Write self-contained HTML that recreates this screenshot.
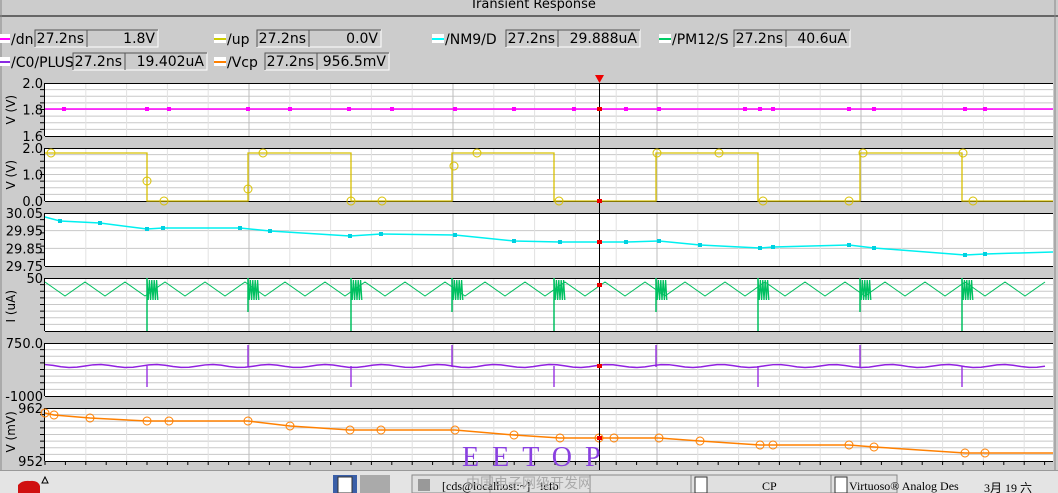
<!DOCTYPE html><html><head><meta charset="utf-8"><style>
html,body{margin:0;padding:0;width:1058px;height:493px;overflow:hidden;background:#cccccc;font-family:"Liberation Sans","DejaVu Sans",sans-serif}
svg{position:absolute;left:0;top:0}
</style></head><body>
<svg id="s" width="1058" height="493" xmlns="http://www.w3.org/2000/svg" font-family="DejaVu Sans, Liberation Sans, sans-serif">
<rect x="0" y="0" width="1058" height="493" fill="#cccccc"/>
<line x1="0" y1="16" x2="1058" y2="16" stroke="#000" stroke-width="1"/>
<line x1="1" y1="0" x2="1" y2="470" stroke="#888"/>
<line x1="1055" y1="0" x2="1055" y2="470" stroke="#888"/>
<text x="470" y="8" font-size="13" fill="#000">Transient Response</text>
<g id="leg" font-size="14" fill="#000"></g>
<g id="plots"></g>
<rect x="0" y="470" width="1058" height="23" fill="#e4e4e4"/>
<line x1="0" y1="470.5" x2="1058" y2="470.5" stroke="#999"/>
<path d="M18 493 L18 485 Q22 480 30 481 Q38 480 40 486 L40 493Z" fill="#d01010"/>
<path d="M42 483 L45 477 L48 483Z" fill="none" stroke="#000"/>
<rect x="333" y="475" width="24" height="18" fill="#3a5fa8"/><rect x="338" y="477" width="14" height="16" fill="#fff" stroke="#333"/>
<rect x="360" y="475" width="30" height="18" fill="#aaa"/>
<rect x="412" y="475" width="485" height="18" fill="#e0e0e0" stroke="#888"/>
<line x1="490" y1="475" x2="490" y2="493" stroke="#888"/><line x1="590" y1="475" x2="590" y2="493" stroke="#888"/>
<line x1="691" y1="475" x2="691" y2="493" stroke="#888"/><line x1="831" y1="475" x2="831" y2="493" stroke="#888"/>
<rect x="418" y="479" width="12" height="12" fill="#999"/>
<rect x="695" y="477" width="12" height="16" fill="#fff" stroke="#333"/>
<rect x="835" y="477" width="12" height="16" fill="#fff" stroke="#333"/>
<g font-family="Liberation Serif, serif" font-size="12" fill="#000">
<text x="442" y="490">[cds@localhost:~]</text><text x="540" y="490">icfb</text><text x="762" y="490">CP</text><text x="849" y="490">Virtuoso® Analog Des</text><text x="984" y="492">3月 19 六</text></g>
<text x="462" y="466" font-family="Liberation Serif, serif" font-size="28" fill="#8a40e0" letter-spacing="13">EETOP</text>
<text x="466" y="488" font-family="Noto Sans CJK SC, sans-serif" font-size="14" fill="#aaa">中国电子网级开发网</text>
</svg>
<script>
const NS="http://www.w3.org/2000/svg";const P=document.getElementById('plots');const L=document.getElementById('leg');
function el(t,a,p){const e=document.createElementNS(NS,t);for(const k in a)e.setAttribute(k,a[k]);(p||P).appendChild(e);return e;}
function txt(x,y,s,a,p){const e=el('text',Object.assign({x:x,y:y},a||{}),p);e.textContent=s;return e;}
function box(x,y,w,s){el('rect',{x:x,y:y,width:w,height:17,fill:'#cccccc',stroke:'#fff'},L);el('path',{d:`M${x} ${y+17}V${y}H${x+w}`,stroke:'#555',fill:'none'},L);txt(x+w-3,y+13,s,{'text-anchor':'end','font-size':14},L);}
function leg(ix,y,c,name,nw,v1,v2,w2){el('rect',{x:ix,y:y+4,width:12,height:9,fill:'#fff'},L);el('line',{x1:ix,y1:y+9,x2:ix+12,y2:y+9,stroke:c,'stroke-width':2},L);
 txt(ix+13,y+14,name,{'font-size':14},L);box(ix+13+nw,y,52,v1);box(ix+13+nw+52,y,w2,v2);}
leg(-2,30,'#ff00ff','/dn',24,'27.2ns','1.8V',71);
leg(214,30,'#cccc00','/up',30,'27.2ns','0.0V',72);
leg(432,30,'#00ffff','/NM9/D',61,'27.2ns','29.888uA',82);
leg(659,30,'#00cc66','/PM12/S',62,'27.2ns','40.6uA',64);
leg(-2,53,'#8a2be2','/C0/PLUS',62,'27.2ns','19.402uA',82);
leg(214,53,'#ff8000','/Vcp',38,'27.2ns','956.5mV',72);
el('path',{d:'M595 75 L604 75 L599.5 83Z',fill:'#e00'});
const X0=45,X1=1053,tops=[83,148,213,278,343,408],H=53;
const ylabs=[['2.0','1.8','1.6'],['2.0','1.0','0.0'],['30.05','29.95','29.85','29.75'],['50','',''],['750.0','','-1000'],['962','','952']];
const ynames=['V (V)','V (V)','','I (uA)','','V (mV)'];
tops.forEach((t,i)=>{el('rect',{x:X0,y:t,width:X1-X0,height:H,fill:'#fff'});
 const n=i==2?3:8;for(let k=1;k<n;k++){const y=t+k*H/n;el('line',{x1:X0,y1:y,x2:X1,y2:y,stroke:'#c8c8c8'});}
 for(let x=X0+40.8;x<X1;x+=40.8){const maj=Math.abs(((x-X0)/204)-Math.round((x-X0)/204))<0.05;el('line',{x1:x,y1:t,x2:x,y2:t+H,stroke:maj?'#bdbdbd':'#e2e2e2'});}
 el('line',{x1:X0,y1:t+.5,x2:X1,y2:t+.5,stroke:'#000'});el('line',{x1:X0,y1:t+H+.5,x2:X1,y2:t+H+.5,stroke:'#000'});
 el('line',{x1:X0-.5,y1:t,x2:X0-.5,y2:t+H,stroke:'#000'});
 const lb=ylabs[i];lb.forEach((s,k)=>{const y=t+k*H/(lb.length-1);if(s)txt(X0-2,y+5,s,{'text-anchor':'end','font-size':13});});
 if(ynames[i]){txt(0,0,ynames[i],{'font-size':12,transform:`translate(15 ${t+H/2+ynames[i].length*3}) rotate(-90)`});}
 for(let k=1;k<8;k++)el('line',{x1:X0-5,y1:t+k*H/8,x2:X0,y2:t+k*H/8,stroke:'#000'});
});
for(let x=X0;x<X1;x+=20.4)el('line',{x1:x,y1:461,x2:x,y2:465,stroke:'#000'});
const fall=[147,351,554,758,962],rise=[248,452,656,860];
el('line',{x1:X0,y1:109,x2:X1,y2:109,stroke:'#ff00ff','stroke-width':1.5});
[64,147,169,248,290,349,392,455,514,574,599,626,659,745,760,773,849,874,965,985].forEach(x=>el('rect',{x:x-2,y:107,width:4,height:4,fill:'#ff00ff'}));
let d=`M${X0} 153`;let st=1;const edges=[147,248,351,452,554,656,758,860,962];edges.forEach(x=>{d+=`H${x}V${st?201:153}`;st=1-st;});d+=`H${X1}`;
el('path',{d:d,stroke:'#d8c000',fill:'none','stroke-width':1.3});
[[51,153],[147,181],[164,201],[248,189],[263,153],[351,201],[382,201],[454,166],[477,153],[559,201],[657,153],[719,153],[763,201],[849,201],[863,153],[963,153],[973,201]].forEach(p=>el('circle',{cx:p[0],cy:p[1],r:4,fill:'none',stroke:'#d8c000'}));
const cy=[[45,217],[60,221],[100,223],[147,229],[163,228],[240,228],[270,231],[350,236],[381,234],[455,235],[514,241],[560,242],[599,242],[626,242],[659,241],[700,245],[760,248],[773,247],[849,245],[874,248],[965,255],[985,254],[1053,252]];
el('polyline',{points:cy.map(p=>p.join(',')).join(' '),stroke:'#00f0f0',fill:'none','stroke-width':1.5});
cy.slice(1,-1).forEach(p=>el('rect',{x:p[0]-2,y:p[1]-2,width:4,height:4,fill:'#00d0e0'}));
let g='';let up=true;for(let x=X0;x<X1;x+=20){g+=`${x},${up?282:296} `;up=!up;}
el('polyline',{points:g,stroke:'#00c060',fill:'none','stroke-width':1});
fall.concat(rise).forEach(x=>{let s='';for(let k=0;k<10;k++)s+=`${x+k*1.2},${k%2?300:280} `;el('polyline',{points:s,stroke:'#00c060',fill:'none','stroke-width':1.3});});
fall.forEach(x=>el('line',{x1:x,y1:278,x2:x,y2:331,stroke:'#00c060','stroke-width':1.5}));
rise.forEach(x=>el('line',{x1:x,y1:278,x2:x,y2:312,stroke:'#00c060','stroke-width':1.5}));
let pp='';for(let x=X0;x<X1;x+=8)pp+=`${x},${366+Math.sin(x/9)*1.5} `;
el('polyline',{points:pp,stroke:'#9020e0',fill:'none','stroke-width':1.5});
rise.forEach(x=>el('line',{x1:x,y1:345,x2:x,y2:367,stroke:'#9020e0','stroke-width':1.3}));
fall.forEach(x=>el('line',{x1:x,y1:366,x2:x,y2:387,stroke:'#9020e0','stroke-width':1.3}));
const oy=[[45,413],[54,415],[90,418],[147,421],[169,421],[248,421],[290,426],[350,430],[381,430],[455,430],[514,435],[560,438],[599,438],[614,438],[659,438],[700,441],[760,445],[773,445],[849,445],[874,447],[965,453],[985,453],[1053,453]];
el('polyline',{points:oy.map(p=>p.join(',')).join(' '),stroke:'#ff8000',fill:'none','stroke-width':1.5});
oy.slice(0,-1).forEach(p=>el('circle',{cx:p[0],cy:p[1],r:4,fill:'none',stroke:'#ff8000'}));
el('line',{x1:599.5,y1:83,x2:599.5,y2:470,stroke:'#000','stroke-width':1});
[109,201,242,285,366,438].forEach(y=>el('rect',{x:597,y:y-2,width:5,height:4,fill:'#e00'}));
</script>
</body></html>
